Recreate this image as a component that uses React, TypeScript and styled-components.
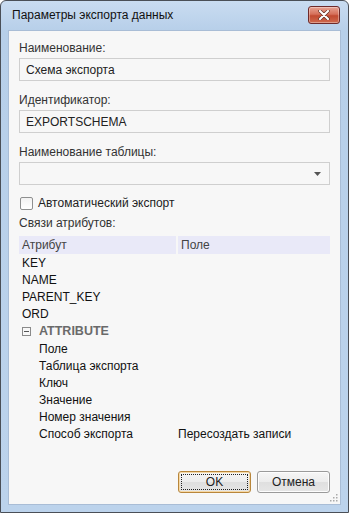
import React from 'react';
import styled, { createGlobalStyle } from 'styled-components';

const GlobalStyle = createGlobalStyle`
  html, body {
    margin: 0;
    padding: 0;
    background: #ffffff;
  }
  body {
    font-family: "Liberation Sans", Arial, sans-serif;
    font-size: 12px;
    color: #222;
  }
`;

const Window = styled.div`
  box-sizing: border-box;
  width: 349px;
  height: 513px;
  display: flex;
  flex-direction: column;
  padding: 0 7px 7px 7px;
  border: 1px solid #4a4f57;
  border-radius: 6px 6px 0 0;
  background: linear-gradient(to bottom, #c9dcf1 0px, #b7cfe9 30px, #bcd3ec 100%);
`;

const TitleBar = styled.div`
  height: 29px;
  flex-shrink: 0;
  display: flex;
  align-items: center;
  justify-content: space-between;
  padding: 0 0 0 4px;
`;

const Title = styled.span`
  font-size: 12px;
  color: #111;
  margin-top: -2px;
`;

const CloseButton = styled.div`
  box-sizing: border-box;
  width: 32px;
  height: 18px;
  margin-top: -2px;
  margin-right: 1px;
  border: 1px solid #6e2a2a;
  border-radius: 3px;
  background: linear-gradient(to bottom, #e7a393 0%, #d5705a 45%, #c14a31 55%, #cf6a4e 100%);
  display: flex;
  align-items: center;
  justify-content: center;
  box-shadow: inset 0 0 0 1px rgba(255, 255, 255, 0.35);
`;

const Client = styled.div`
  flex: 1;
  display: flex;
  flex-direction: column;
  background: #f7f7f7;
  border: 1px solid #a9bdd6;
  padding: 10px 10px 11px 10px;
  position: relative;
`;

const Field = styled.div`
  display: flex;
  flex-direction: column;
  margin-bottom: 12px;
`;

const Label = styled.div`
  line-height: 15px;
  color: #333;
  margin-bottom: 2px;
`;

const Input = styled.div`
  box-sizing: border-box;
  height: 23px;
  border: 1px solid #cfcfcf;
  background: #f7f7f7;
  padding: 0 6px;
  display: flex;
  align-items: center;
  color: #222;
`;

const Select = styled(Input)`
  justify-content: flex-end;
  padding: 0 8px;
`;

const CheckRow = styled.label`
  display: flex;
  align-items: center;
  gap: 5px;
  margin: -2px 0 5px 1px;
  height: 16px;
  color: #222;
`;

const Checkbox = styled.span`
  box-sizing: border-box;
  width: 13px;
  height: 13px;
  border: 1px solid #8e8f8f;
  border-radius: 2px;
  background: linear-gradient(to bottom, #f2f2f2, #ffffff);
`;

const GridArea = styled.div`
  flex: 1;
  display: flex;
  flex-direction: column;
`;

const HeaderRow = styled.div`
  display: grid;
  grid-template-columns: 157px 1fr;
  column-gap: 2px;
  height: 18px;
  margin-top: 3px;
`;

const HeaderCell = styled.div`
  background: #e9e9f8;
  color: #444;
  display: flex;
  align-items: center;
  padding-left: 3px;
`;

const Row = styled.div<{ indent?: number }>`
  display: grid;
  grid-template-columns: ${(p) => 159 - (p.indent || 0)}px 1fr;
  height: 17.2px;
  align-items: center;
  padding-left: ${(p) => p.indent || 0}px;
  color: #111;
`;

const GroupRow = styled.div`
  display: flex;
  align-items: center;
  height: 17.2px;
  padding-left: 3px;
  gap: 8px;
  font-size: 12.5px;
  font-weight: bold;
  color: #6a6a6a;
`;

const Expander = styled.span`
  box-sizing: border-box;
  width: 9px;
  height: 9px;
  border: 1px solid #8a8a8a;
  position: relative;
  &::after {
    content: '';
    position: absolute;
    left: 1px;
    right: 1px;
    top: 3px;
    height: 1px;
    background: #555;
  }
`;

const Footer = styled.div`
  display: flex;
  justify-content: flex-end;
  gap: 6px;
`;

const Button = styled.button<{ focused?: boolean }>`
  box-sizing: border-box;
  width: 73px;
  height: 22px;
  font-family: "Liberation Sans", Arial, sans-serif;
  font-size: 12px;
  color: #222;
  border: 1px solid ${(p) => (p.focused ? '#b8863b' : '#9a9a9a')};
  border-radius: 3px;
  background: linear-gradient(to bottom, #f6f6f6 0%, #ececec 50%, #dfdfdf 51%, #e6e6e6 100%);
  box-shadow: ${(p) => (p.focused ? 'inset 0 0 0 1px #f6d9a6' : 'inset 0 0 0 1px #fdfdfd')};
  outline: ${(p) => (p.focused ? '1px dotted #222' : 'none')};
  outline-offset: -4px;
  padding: 0;
`;

const Grip = styled.svg`
  position: absolute;
  right: 2px;
  bottom: 2px;
`;

const rows = ['KEY', 'NAME', 'PARENT_KEY', 'ORD'];
const children: [string, string][] = [
  ['Поле', ''],
  ['Таблица экспорта', ''],
  ['Ключ', ''],
  ['Значение', ''],
  ['Номер значения', ''],
  ['Способ экспорта', 'Пересоздать записи'],
];

export default function App() {
  return (
    <>
      <GlobalStyle />
      <Window>
        <TitleBar>
          <Title>Параметры экспорта данных</Title>
          <CloseButton>
            <svg width="12" height="10" viewBox="0 0 12 10">
              <path d="M2 1 L10 9 M10 1 L2 9" stroke="#5a2a20" strokeWidth="3.4" strokeLinecap="round" />
              <path d="M2 1 L10 9 M10 1 L2 9" stroke="#ffffff" strokeWidth="2.2" strokeLinecap="round" />
            </svg>
          </CloseButton>
        </TitleBar>
        <Client>
          <Field>
            <Label>Наименование:</Label>
            <Input>Схема экспорта</Input>
          </Field>
          <Field>
            <Label>Идентификатор:</Label>
            <Input>EXPORTSCHEMA</Input>
          </Field>
          <Field>
            <Label>Наименование таблицы:</Label>
            <Select>
              <svg width="7" height="4" viewBox="0 0 7 4">
                <path d="M0 0 H7 L3.5 4 Z" fill="#555" />
              </svg>
            </Select>
          </Field>
          <CheckRow>
            <Checkbox />
            Автоматический экспорт
          </CheckRow>
          <Label>Связи атрибутов:</Label>
          <GridArea>
            <HeaderRow>
              <HeaderCell>Атрибут</HeaderCell>
              <HeaderCell>Поле</HeaderCell>
            </HeaderRow>
            {rows.map((r) => (
              <Row key={r} indent={3}>
                <span>{r}</span>
                <span />
              </Row>
            ))}
            <GroupRow>
              <Expander />
              ATTRIBUTE
            </GroupRow>
            {children.map(([a, b]) => (
              <Row key={a} indent={20}>
                <span>{a}</span>
                <span>{b}</span>
              </Row>
            ))}
          </GridArea>
          <Footer>
            <Button focused>OK</Button>
            <Button>Отмена</Button>
          </Footer>
          <Grip width="8" height="8" viewBox="0 0 8 8">
            <rect x="6" y="0" width="1.5" height="1.5" fill="#aaa" />
            <rect x="3" y="3" width="1.5" height="1.5" fill="#aaa" />
            <rect x="6" y="3" width="1.5" height="1.5" fill="#aaa" />
            <rect x="0" y="6" width="1.5" height="1.5" fill="#aaa" />
            <rect x="3" y="6" width="1.5" height="1.5" fill="#aaa" />
            <rect x="6" y="6" width="1.5" height="1.5" fill="#aaa" />
          </Grip>
        </Client>
      </Window>
    </>
  );
}
